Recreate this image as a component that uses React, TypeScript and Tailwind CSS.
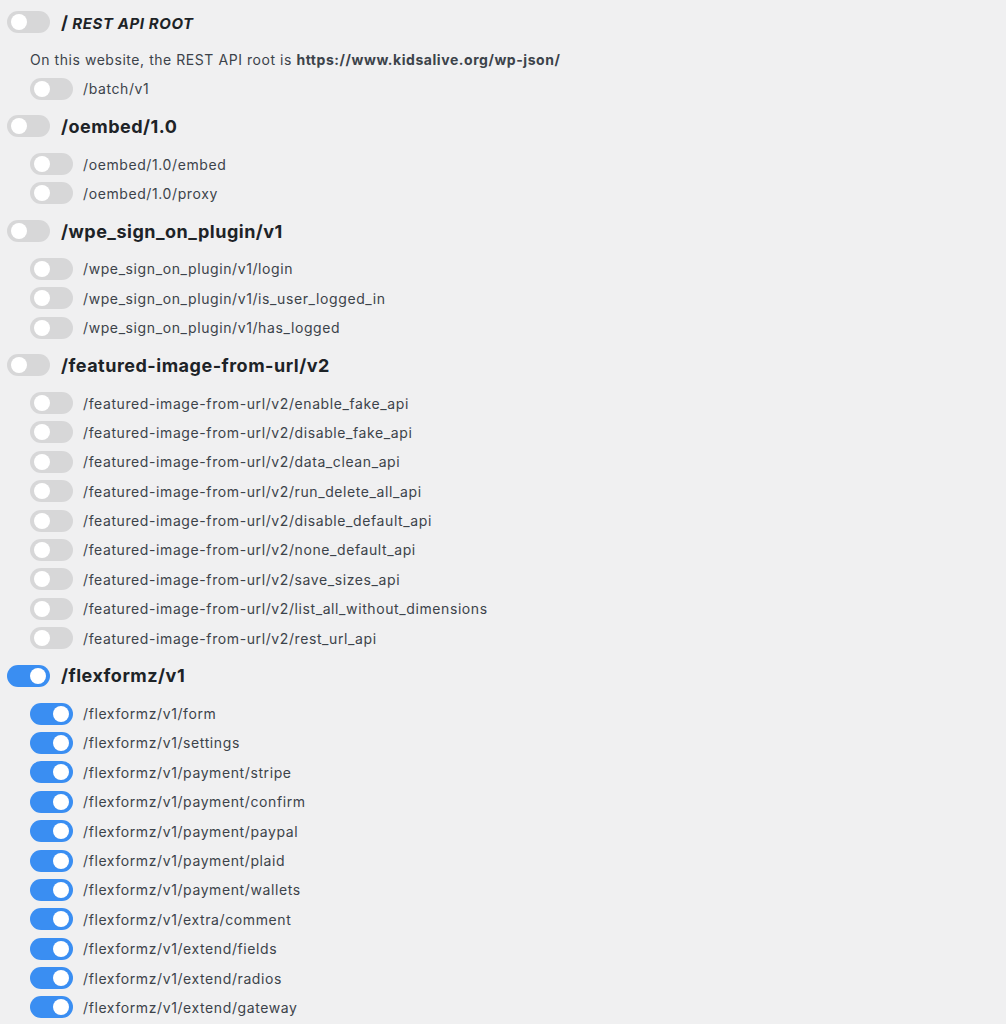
import React from "react";

const Toggle = ({ on }: { on: boolean }) => (
  <div
    className={
      "relative h-[22px] w-[43px] shrink-0 rounded-full " +
      (on ? "bg-[#3a8ef2]" : "bg-[#d7d7d8]")
    }
  >
    <div
      className={
        "absolute top-[3px] h-[16px] w-[16px] rounded-full bg-white " +
        (on ? "right-[4px]" : "left-[4px]")
      }
    />
  </div>
);

const Header = ({ on, children }: { on: boolean; children: React.ReactNode }) => (
  <div className="flex h-[36px] items-center pl-[7px]">
    <Toggle on={on} />
    <div className="ml-[11px]">{children}</div>
  </div>
);

const Sub = ({ on, label }: { on: boolean; label: string }) => (
  <div className="flex h-[29.4px] items-center pl-[30px]">
    <Toggle on={on} />
    <span className="ml-[10px] text-[14px] tracking-[0.6px] text-[#3c434a]">{label}</span>
  </div>
);

const groups: { title: string; on: boolean; subs: string[] }[] = [
  { title: "/oembed/1.0", on: false, subs: ["/oembed/1.0/embed", "/oembed/1.0/proxy"] },
  {
    title: "/wpe_sign_on_plugin/v1",
    on: false,
    subs: [
      "/wpe_sign_on_plugin/v1/login",
      "/wpe_sign_on_plugin/v1/is_user_logged_in",
      "/wpe_sign_on_plugin/v1/has_logged",
    ],
  },
  {
    title: "/featured-image-from-url/v2",
    on: false,
    subs: [
      "/featured-image-from-url/v2/enable_fake_api",
      "/featured-image-from-url/v2/disable_fake_api",
      "/featured-image-from-url/v2/data_clean_api",
      "/featured-image-from-url/v2/run_delete_all_api",
      "/featured-image-from-url/v2/disable_default_api",
      "/featured-image-from-url/v2/none_default_api",
      "/featured-image-from-url/v2/save_sizes_api",
      "/featured-image-from-url/v2/list_all_without_dimensions",
      "/featured-image-from-url/v2/rest_url_api",
    ],
  },
  {
    title: "/flexformz/v1",
    on: true,
    subs: [
      "/flexformz/v1/form",
      "/flexformz/v1/settings",
      "/flexformz/v1/payment/stripe",
      "/flexformz/v1/payment/confirm",
      "/flexformz/v1/payment/paypal",
      "/flexformz/v1/payment/plaid",
      "/flexformz/v1/payment/wallets",
      "/flexformz/v1/extra/comment",
      "/flexformz/v1/extend/fields",
      "/flexformz/v1/extend/radios",
      "/flexformz/v1/extend/gateway",
    ],
  },
];

export default function App() {
  return (
    <div
      className="min-h-screen w-full overflow-hidden bg-[#f0f0f1] pt-[4px]"
      style={{ fontFamily: "Inter, 'Noto Sans', sans-serif" }}
    >
      <div>
        <Header on={false}>
          <span className="text-[18px] font-bold text-[#1d2327]">/ </span>
          <span className="text-[15px] font-bold italic uppercase tracking-[0.6px] text-[#1d2327]">
            REST API ROOT
          </span>
        </Header>
        <div className="pt-[5px] pb-[5px]">
          <div className="flex h-[29px] items-center pl-[30px] text-[14px] tracking-[0.55px] text-[#3c434a]">
            <span>
              On this website, the REST API root is{" "}
              <b className="font-bold">https://www.kidsalive.org/wp-json/</b>
            </span>
          </div>
          <Sub on={false} label="/batch/v1" />
        </div>
      </div>
      {groups.map((g) => (
        <div key={g.title}>
          <Header on={g.on}>
            <span className="text-[18px] font-bold tracking-[0.5px] text-[#1d2327]">{g.title}</span>
          </Header>
          <div className="pt-[5px] pb-[5px]">
            {g.subs.map((s) => (
              <Sub key={s} on={g.on} label={s} />
            ))}
          </div>
        </div>
      ))}
    </div>
  );
}
